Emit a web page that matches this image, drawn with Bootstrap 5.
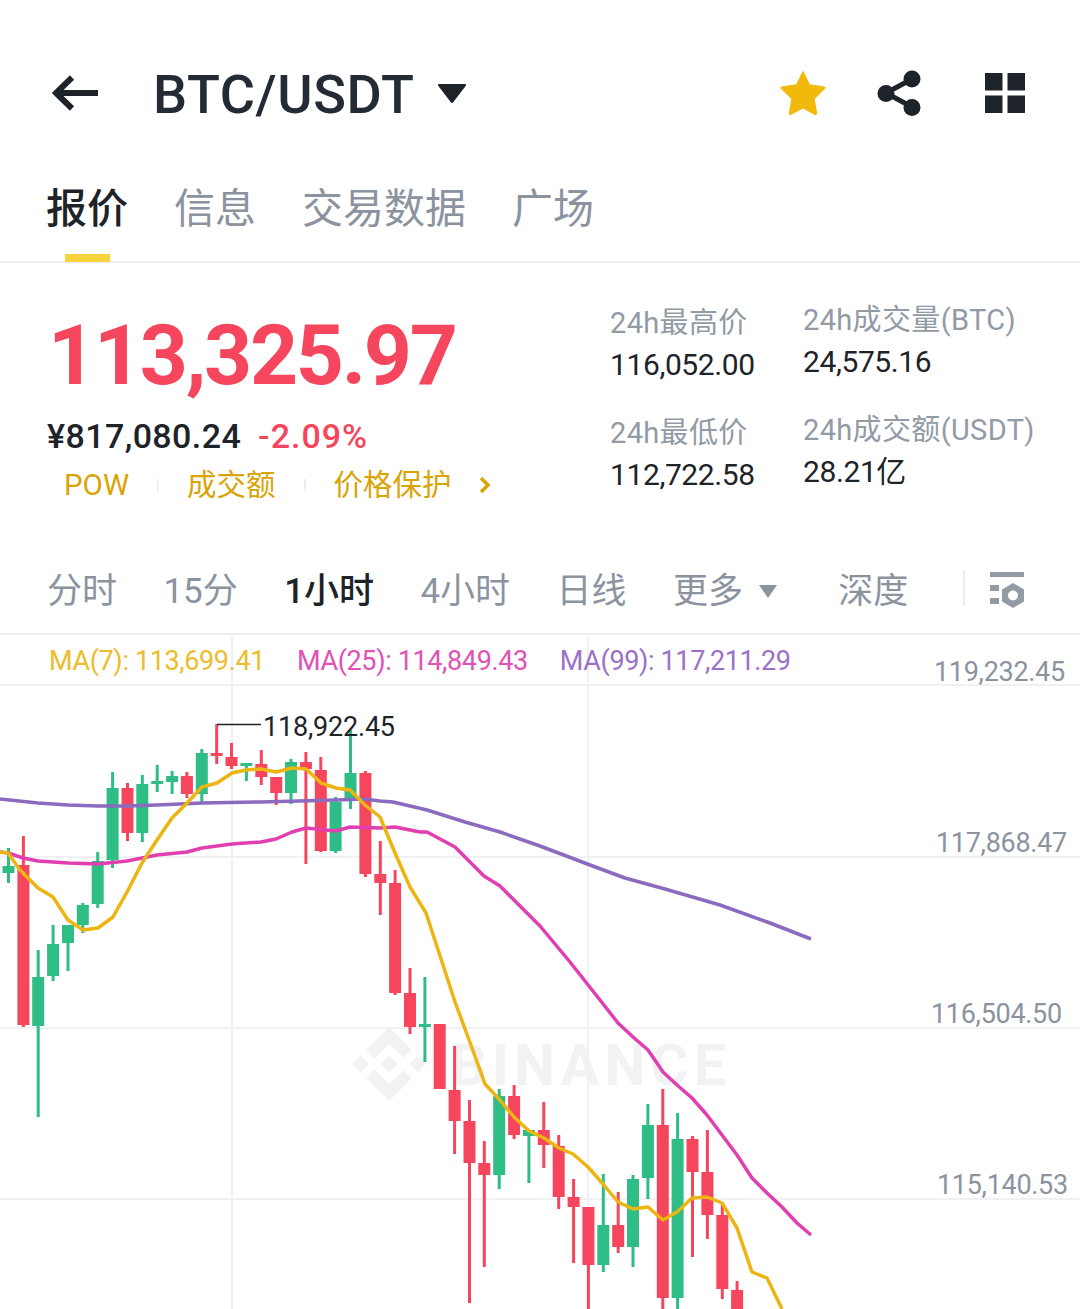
<!DOCTYPE html>
<html lang="zh-CN">
<head>
    <meta charset="UTF-8">
    <title>BTC/USDT</title>
    <link href="https://cdn.jsdelivr.net/npm/bootstrap@5.3.0/dist/css/bootstrap.min.css" rel="stylesheet">
    <style>
        body { font-family: Roboto, "Noto Sans CJK SC", sans-serif; color: #1e2329; background: #fff; width: 1080px; height: 1309px; overflow: hidden; }
        .top-bar { height: 60px; margin-top: 63px; padding-left: 52px; }
        .pair-name { font-size: 54px; font-weight: 500; line-height: 60px; margin-left: 55px; padding-top: 4px; letter-spacing: .6px; color: #252b35; }
        .pair-caret { margin-left: 23px; }
        .top-icons svg { display: block; }
        .share-icon { margin-left: 51px; }
        .grid-icon { margin: 0 55px 0 64px; }
        .tab-row { height: 100px; margin-top: 40px; padding: 0 0 6px 46px; gap: 46px; border-bottom: 2px solid #eceef0; font-size: 41px; line-height: 1; color: #8b939f; }
        .tab-on { color: #1e2329; font-weight: 500; position: relative; }
        .tab-on::after { content: ""; position: absolute; left: 19px; bottom: -32px; width: 45px; height: 8px; background: #f8d33a; }
        .quote { height: 290px; }
        .quote-left { width: 610px; padding-left: 47px; }
        .last-price { font-size: 84px; font-weight: 700; line-height: 84px; color: #f6465d; margin: 51px 0 0 1px; letter-spacing: -2.300px; }
        .fiat-row { margin-top: 18px; font-size: 34px; line-height: 40px; font-weight: 500; letter-spacing: .4px; }
        .fiat-change { color: #f6465d; margin-left: 17px; letter-spacing: 1px; }
        .tag-row { margin: 10px 0 0 17px; font-size: 29.500px; line-height: 38px; color: #d9a406; }
        .tag-sep { width: 2px; height: 12px; background: #eceef0; margin: 0 28px; }
        .tag-more { margin-left: 26px; }
        .stat-col { width: 193px; }
        .stat-col-a { padding-top: 40px; }
        .stat-col-b { padding-top: 37px; width: 270px; }
        .stat-label { font-size: 29px; line-height: 40px; color: #929aa5; letter-spacing: .35px; white-space: nowrap; }
        .stat-value { font-size: 30px; line-height: 40px; margin-top: 2px; margin-bottom: 28px; letter-spacing: -.4px; }
        .interval-row { height: 82px; padding: 0 0 4px 47px; gap: 46.400px; border-bottom: 2px solid #eceef0; font-size: 35px; line-height: 1; color: #8b939f; }
        .interval-on { color: #1e2329; font-weight: 500; }
        .interval-depth { margin-left: 15px; }
        .depth-tools { margin-left: 8px; }
        .chart-box { position: relative; height: 674px; }
        .chart-box svg { display: block; }
        .chart-box text { font-family: Roboto, sans-serif; }
        .ma-row { position: absolute; left: 49px; top: 8px; gap: 32px; font-size: 27px; line-height: 36px; letter-spacing: -.37px; white-space: nowrap; }
        .ma-seven { color: #edbc2c; }
        .ma-twentyfive { color: #e052b4; }
        .ma-ninetynine { color: #9a71c6; }
    </style>
</head>
<body>
<div class="d-flex align-items-center top-bar">
    <svg width="46" height="36" viewBox="0 0 46 36"><path d="M46 18H4M20 2.500 4 18l16 15.500" fill="none" stroke="#1e2329" stroke-width="6"/></svg>
    <span class="pair-name">BTC/USDT</span>
    <svg class="pair-caret" width="28" height="20" viewBox="0 0 28 20"><path d="M1 1h26a1 1 0 0 1 1 1.500L15 19.500a1.300 1.300 0 0 1-2 0L0 2.500A1 1 0 0 1 1 1z" fill="#1e2329"/></svg>
    <div class="d-flex align-items-center ms-auto top-icons">
        <svg width="46" height="46" viewBox="0 0 46 46"><path d="M23 1.500l6.600 13.300 14.700 2.100a1 1 0 0 1 .500 1.700L34.200 29l2.500 14.600a1 1 0 0 1-1.500 1L23 38l-12.200 6.600a1 1 0 0 1-1.500-1L11.800 29 1.200 18.600a1 1 0 0 1 .500-1.700l14.700-2.100z" fill="#f0b90b" stroke="#f0b90b" stroke-linejoin="round"/></svg>
        <svg class="share-icon" width="44" height="46" viewBox="0 0 44 46"><path d="M35 9 9 23l26 14" fill="none" stroke="#1e2329" stroke-width="5"/><circle cx="35" cy="9" r="8.500" fill="#1e2329"/><circle cx="9" cy="23.500" r="8.500" fill="#1e2329"/><circle cx="35" cy="37.500" r="8.500" fill="#1e2329"/></svg>
        <svg class="grid-icon" width="40" height="40" viewBox="0 0 40 40"><path d="M0 0h17.500v17.500H0zM22.500 0H40v17.500H22.500zM0 22.500h17.500V40H0zM22.500 22.500H40V40H22.500z" fill="#1e2329"/></svg>
    </div>
</div>

<div class="d-flex align-items-center tab-row">
    <span class="tab-on">报价</span>
    <span>信息</span>
    <span>交易数据</span>
    <span>广场</span>
</div>

<div class="d-flex quote">
    <div class="quote-left">
        <div class="last-price">113,325.97</div>
        <div class="fiat-row">¥817,080.24<span class="fiat-change">-2.09%</span></div>
        <div class="d-flex align-items-center tag-row">
            <span>POW</span><span class="tag-sep"></span>
            <span>成交额</span><span class="tag-sep"></span>
            <span>价格保护</span>
            <svg class="tag-more" width="14" height="18" viewBox="0 0 14 18"><path d="M3 2l7 7-7 7" fill="none" stroke="#d9a406" stroke-width="3.500"/></svg>
        </div>
    </div>
    <div class="stat-col stat-col-a">
        <div class="stat-label">24h最高价</div>
        <div class="stat-value">116,052.00</div>
        <div class="stat-label">24h最低价</div>
        <div class="stat-value">112,722.58</div>
    </div>
    <div class="stat-col stat-col-b">
        <div class="stat-label">24h成交量(BTC)</div>
        <div class="stat-value">24,575.16</div>
        <div class="stat-label">24h成交额(USDT)</div>
        <div class="stat-value">28.21亿</div>
    </div>
</div>

<div class="d-flex align-items-center interval-row">
    <span>分时</span>
    <span>15分</span>
    <span class="interval-on">1小时</span>
    <span>4小时</span>
    <span>日线</span>
    <span class="d-flex align-items-center">更多
        <svg class="ms-3" width="18" height="13" viewBox="0 0 18 13"><path d="M0 0h18L9 13z" fill="#8b939f"/></svg>
    </span>
    <span class="interval-depth">深度</span>
    <span class="d-flex align-items-center depth-tools">
        <svg class="mb-1" width="62" height="38" viewBox="0 0 62 38">
            <path d="M0 0h2v36H0z" fill="#eaecef"/>
            <path d="M27 2h34v5H27zM27 15h9v6h-9zM27 28h9v6h-9z" fill="#929aa5"/>
            <path fill-rule="evenodd" d="M50 13l11 6.500v12L50 38l-11-6.500v-12zm0 7.500a5 5 0 1 0 0 10 5 5 0 0 0 0-10z" fill="#929aa5"/>
        </svg>
    </span>
</div>

<div class="chart-box">
    <svg id="chart" width="1080" height="674" viewBox="0 635 1080 674"></svg>
    <div class="d-flex ma-row">
        <span class="ma-seven">MA(7): 113,699.41</span>
        <span class="ma-twentyfive">MA(25): 114,849.43</span>
        <span class="ma-ninetynine">MA(99): 117,211.29</span>
    </div>
</div>

<script src="https://cdn.jsdelivr.net/npm/bootstrap@5.3.0/dist/js/bootstrap.bundle.min.js"></script>
<script>
// [wick top, body top, body bottom, wick bottom, up?] in page y
const candles = [
    [848,866,873,883,1],[836,865,1025,1027,0],[950,977,1026,1117,1],[925,944,976,981,1],[925,925,943,971,1],
    [903,905,925,933,1],[852,861,904,908,1],[772,788,860,868,1],[783,788,833,841,0],[775,784,833,842,1],
    [765,781,784,792,1],[771,776,782,794,1],[772,776,794,798,0],[749,753,794,802,1],[724,753,756,764,0],
    [743,757,766,769,0],[763,763,765,781,1],[750,764,777,785,0],[777,777,793,805,0],[759,762,793,804,1],
    [752,762,769,864,0],[757,770,851,852,0],[797,802,851,853,1],[730,773,798,809,1],[771,773,874,877,0],
    [841,874,883,915,0],[870,883,993,995,0],[968,993,1027,1034,0],[977,1024,1026,1062,1],[1024,1024,1089,1089,0],
    [1046,1090,1121,1154,0],[1100,1121,1163,1303,0],[1141,1163,1175,1267,0],[1089,1096,1175,1189,1],[1085,1096,1135,1139,0],
    [1130,1130,1136,1183,1],[1102,1130,1145,1168,0],[1135,1146,1197,1209,0],[1179,1197,1207,1263,0],[1207,1207,1265,1320,0],
    [1174,1225,1265,1272,1],[1192,1225,1247,1253,0],[1175,1179,1247,1267,1],[1104,1125,1178,1199,1],[1089,1125,1298,1320,0],
    [1113,1139,1298,1320,1],[1136,1139,1172,1257,0],[1130,1172,1215,1239,0],[1205,1215,1289,1299,0],[1281,1290,1320,1320,0]
];
const ma99 = '0,799 38,803 68,805 98,806 127,806 157,805 202,803 261,802 336,800 365,799 380,801 393,802 427,810 465,822 500,832 540,846 590,865 625,878 665,889 720,905 770,923 811,939';
const ma25 = '0,852 8,853 23,858 38,861 68,863 98,864 127,861 157,855 187,852 202,848 232,844 261,842 276,839 292,832 306,828 336,831 350,827 380,828 395,827 420,832 427,832 455,847 484,876 500,886 540,926 570,962 600,1000 618,1023 633,1037 648,1050 663,1072 677,1085 692,1098 707,1115 722,1135 737,1155 752,1178 767,1193 782,1207 797,1223 811,1235';
const ma7 = '0,852 8,853 20,870 38,888 53,897 68,920 83,930 98,928 113,917 127,892 142,863 157,840 172,818 187,803 202,787 217,783 232,773 246,770 261,769 276,772 292,768 306,769 321,783 336,788 350,790 365,805 380,817 395,853 410,887 426,913 444,968 455,1002 468,1037 485,1084 499,1099 514,1117 529,1131 544,1138 559,1148 573,1154 588,1167 603,1184 618,1202 633,1209 648,1207 663,1220 677,1212 692,1198 707,1197 722,1203 737,1228 752,1272 767,1278 782,1309';
const axisLabels = [[934,681,'119,232.45'],[936,852,'117,868.47'],[931,1023,'116,504.50'],[937,1194,'115,140.53']];

let out = '';
// watermark
out += '<g transform="translate(352 1027) scale(2.3125)" fill="#f1f2f3"><path d="M9.790 13.450 16 7.240l6.210 6.210 3.610-3.610L16 0 6.180 9.840zM0 16l3.610-3.610L7.220 16l-3.610 3.610zM9.790 18.550 16 24.760l6.210-6.210 3.610 3.610L16 32 6.180 22.160zM24.780 16l3.610-3.610L32 16l-3.610 3.610zM19.660 16 16 12.340 12.350 16 16 19.660z"/></g>';
out += '<text x="450" y="1085" font-size="58" font-weight="700" fill="#f1f2f3" textLength="276" lengthAdjust="spacing">BINANCE</text>';
// grid
[685,857,1028,1199].forEach(y => { out += `<rect x="0" y="${y-1}" width="1080" height="2" fill="#f0f1f3"/>`; });
[232,588].forEach(x => { out += `<rect x="${x-1}" y="637" width="2" height="680" fill="#f0f1f3"/>`; });
// candles
candles.forEach((c, i) => {
    const x = 8.5 + 14.87 * i;
    const color = c[4] ? '#2ebd85' : '#f6465d';
    out += `<rect x="${(x-1.5).toFixed(1)}" y="${c[0]}" width="3" height="${c[3]-c[0]}" fill="${color}"/>`;
    out += `<rect x="${(x-6).toFixed(1)}" y="${c[1]}" width="12" height="${Math.max(c[2]-c[1],3)}" fill="${color}"/>`;
});
// moving averages
[[ma99,'#8a6bbf'],[ma25,'#e13fb0'],[ma7,'#edb511']].forEach(([pts,color]) => {
    out += `<polyline points="${pts}" fill="none" stroke="${color}" stroke-width="3.500" stroke-linejoin="round"/>`;
});
// high marker
out += '<path d="M217 724.500h44" stroke="#1e2329" stroke-width="1.500"/>';
out += '<text x="263" y="736" font-size="27" letter-spacing="-.2" fill="#1e2329">118,922.45</text>';
axisLabels.forEach(([x,y,t]) => { out += `<text x="${x}" y="${y}" font-size="27" letter-spacing="-.3" fill="#8b939f">${t}</text>`; });
document.getElementById('chart').innerHTML = out;
</script>
</body>
</html>
